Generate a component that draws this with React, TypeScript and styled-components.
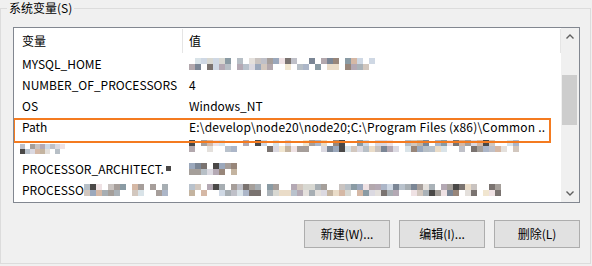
import React from 'react';
import styled, { createGlobalStyle } from 'styled-components';

const Global = createGlobalStyle`
  html, body { margin: 0; padding: 0; background: #f0f0f0; }
  body {
    width: 592px; height: 266px; overflow: hidden;
    font-family: "Noto Sans CJK SC", "Noto Sans", sans-serif;
    font-size: 12px; color: #000;
  }
`;

const Group = styled.fieldset`
  margin: 0;
  padding: 0;
  min-width: 0;
  width: 591px;
  height: 264px;
  box-sizing: border-box;
  border: 1px solid #dcdcdc;
`;

const Legend = styled.legend`
  margin-left: 6px;
  padding: 0 2px;
  font-size: 12px;
  line-height: 16px;
  color: #000;
`;

const Body = styled.div`
  display: flex;
  flex-direction: column;
  padding: 11px 10px 0 12px;
`;

const ListBox = styled.div`
  position: relative;
  display: flex;
  width: 567px;
  height: 176px;
  box-sizing: border-box;
  border: 1px solid #828790;
  background: #fff;
  overflow: hidden;
`;

const Content = styled.div`
  width: 547px;
  display: flex;
  flex-direction: column;
  overflow: hidden;
`;

const Header = styled.div`
  display: grid;
  grid-template-columns: 169px 378px;
  height: 25px;
  flex-shrink: 0;
`;

const HeadCell = styled.div<{ $pad: number }>`
  display: flex;
  align-items: center;
  padding-left: ${p => p.$pad}px;
  border-right: 1px solid #e5e5e5;
  margin-top: 1px;
  line-height: 16px;
`;

const Row = styled.div`
  display: grid;
  grid-template-columns: 169px 378px;
  height: 21px;
  flex-shrink: 0;
`;

const Cell = styled.div<{ $pad: number; $ls?: number }>`
  display: flex;
  align-items: center;
  padding-left: ${p => p.$pad}px;
  white-space: nowrap;
  overflow: hidden;
  line-height: 16px;
  letter-spacing: ${p => p.$ls ?? 0}px;
`;

const Scrollbar = styled.div`
  width: 18px;
  display: flex;
  flex-direction: column;
  background: #f0f0f0;
`;

const ArrowBtn = styled.div`
  height: 17px;
  flex-shrink: 0;
  display: flex;
  align-items: center;
  justify-content: center;
  padding-right: 1px;
`;

const Track = styled.div`
  flex: 1;
  padding-left: 1px;
`;

const Thumb = styled.div`
  width: 15px;
  height: 50px;
  background: #cdcdcd;
`;

const Highlight = styled.div`
  position: absolute;
  left: -1px;
  top: 90px;
  width: 538px;
  height: 25px;
  box-sizing: border-box;
  border: 2px solid #f47b20;
  pointer-events: none;
`;

const Buttons = styled.div`
  display: flex;
  justify-content: flex-end;
  gap: 9px;
  margin-top: 17px;
`;

const Button = styled.button`
  width: 86px;
  height: 28px;
  box-sizing: border-box;
  border: 1px solid #adadad;
  background: #e1e1e1;
  font-family: "Noto Sans CJK SC", "Noto Sans", sans-serif;
  font-size: 12px;
  color: #000;
  padding: 0;
  line-height: 16px;
`;

const MosaicSvg = styled.svg<{ $dy: number; $ml: number }>`
  display: block;
  flex-shrink: 0;
  margin-left: ${p => p.$ml}px;
  transform: translateY(${p => p.$dy}px);
`;

const palette = [
  '#7a7370', '#b9c2cc', '#a69e9a', '#4a4847', '#b3a8ad', '#a59f9a', '#acb6c8',
  '#efe2e4', '#bfc0c8', '#f1e6d0', '#d8d8d2', '#a7aeb3', '#dbd9e1', '#eadcc8',
  '#9ba8bc', '#7b8695', '#d5b8a5', '#b4a9b4', '#d9e3e8', '#8a9ba4', '#c4b4a0',
  '#98867a', '#c9c3c0', '#e4e0dc', '#b7bfc6', '#d2c7be', '#cfd8e4', '#aab2b8',
];

function Mosaic({ cols, rows, seed, cell = 6, gap = 0.25, dy = 0, ml = 0 }: {
  cols: number; rows: number; seed: number; cell?: number; gap?: number; dy?: number; ml?: number;
}) {
  let s = seed * 9301 + 49297;
  const rnd = () => {
    s = (s * 9301 + 49297) % 233280;
    return s / 233280;
  };
  const rects: React.ReactNode[] = [];
  for (let r = 0; r < rows; r++) {
    for (let c = 0; c < cols; c++) {
      const v = rnd();
      const p = rnd();
      if (v < gap) continue;
      rects.push(
        <rect key={`${r}-${c}`} x={c * cell} y={r * cell} width={cell} height={cell}
          fill={palette[Math.floor(p * palette.length)]} />
      );
    }
  }
  return (
    <MosaicSvg $dy={dy} $ml={ml} width={cols * cell} height={rows * cell} viewBox={`0 0 ${cols * cell} ${rows * cell}`}>
      {rects}
    </MosaicSvg>
  );
}

function Chevron({ up }: { up: boolean }) {
  return (
    <svg width="8" height="5" viewBox="0 0 8 5">
      <polyline
        points={up ? '0.5,4.5 4,1 7.5,4.5' : '0.5,0.5 4,4 7.5,0.5'}
        fill="none" stroke="#606060" strokeWidth="1.4" />
    </svg>
  );
}

export default function App() {
  return (
    <>
      <Global />
      <Group>
        <Legend>系统变量(S)</Legend>
        <Body>
          <ListBox>
            <Content>
              <Header>
                <HeadCell $pad={8}>变量</HeadCell>
                <HeadCell $pad={6}>值</HeadCell>
              </Header>
              <Row>
                <Cell $pad={8}>MYSQL_HOME</Cell>
                <Cell $pad={6}><Mosaic cols={31} rows={2} seed={3} /></Cell>
              </Row>
              <Row>
                <Cell $pad={8}>NUMBER_OF_PROCESSORS</Cell>
                <Cell $pad={6}>4</Cell>
              </Row>
              <Row>
                <Cell $pad={8}>OS</Cell>
                <Cell $pad={6}>Windows_NT</Cell>
              </Row>
              <Row>
                <Cell $pad={8}>Path</Cell>
                <Cell $pad={6} $ls={0.2}>E:\develop\node20\node20;C:\Program Files (x86)\Common ..</Cell>
              </Row>
              <Row>
                <Cell $pad={6}><Mosaic cols={9} rows={2} cell={5} seed={11} dy={1} /></Cell>
                <Cell $pad={6}><Mosaic cols={55} rows={2} cell={6} seed={7} gap={0.35} dy={-2} /></Cell>
              </Row>
              <Row>
                <Cell $pad={8}>PROCESSOR_ARCHITECT.<Mosaic cols={1} rows={1} cell={5} seed={2} gap={0} ml={2} /></Cell>
                <Cell $pad={6}><Mosaic cols={8} rows={2} cell={6} seed={5} gap={0.2} /></Cell>
              </Row>
              <Row>
                <Cell $pad={8}>PROCESSO<Mosaic cols={14} rows={2} cell={6} seed={13} gap={0.15} /></Cell>
                <Cell $pad={6}><Mosaic cols={52} rows={2} cell={6} seed={17} gap={0.2} /></Cell>
              </Row>
              <Row>
                <Cell $pad={8} />
                <Cell $pad={6} />
              </Row>
            </Content>
            <Scrollbar>
              <ArrowBtn><Chevron up /></ArrowBtn>
              <Track>
                <Thumb style={{ marginTop: 30 }} />
              </Track>
              <ArrowBtn><Chevron up={false} /></ArrowBtn>
            </Scrollbar>
            <Highlight />
          </ListBox>
          <Buttons>
            <Button>新建(W)...</Button>
            <Button>编辑(I)...</Button>
            <Button>删除(L)</Button>
          </Buttons>
        </Body>
      </Group>
    </>
  );
}
